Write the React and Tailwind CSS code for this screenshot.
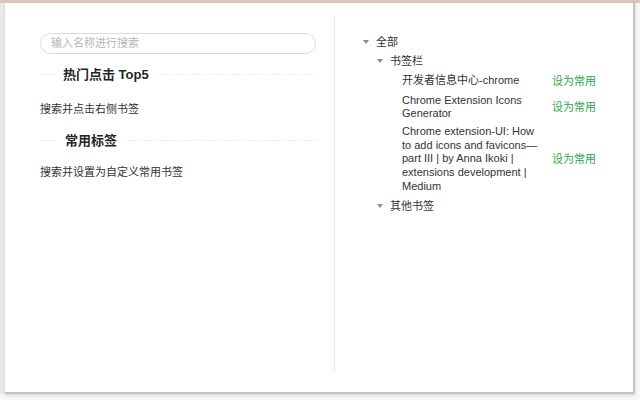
const FONT = { fontFamily: '"Liberation Sans", "Noto Sans CJK SC", sans-serif' }

const BOOKMARKS = [
  { id: 1, title: '开发者信息中心-chrome' },
  { id: 2, title: 'Chrome Extension Icons Generator' },
  { id: 3, title: 'Chrome extension-UI: How to add icons and favicons—part III | by Anna Ikoki | extensions development | Medium' },
]

function Caret() {
  return (
    <svg width="6" height="4" viewBox="0 0 6 4" className="shrink-0">
      <path d="M0 0h6L3 4z" fill="#8c8c8c" />
    </svg>
  )
}

function SectionTitle({ children }) {
  return (
    <div className="flex items-center">
      <div className="w-[16px] border-t border-dashed border-[#ececec]" />
      <span className="px-[7px] text-[13px] font-bold text-[#262626]">{children}</span>
      <div className="flex-1 border-t border-dashed border-[#ececec]" />
    </div>
  )
}

export default function App() {
  return (
    <div className="w-[640px] h-[400px] bg-[#f7f7f7] overflow-hidden flex flex-col" style={FONT}>
      <div className="h-[3px] bg-[#dcc6be] shrink-0" />
      <div className="flex flex-1">
        <div className="w-[5px] h-[391px] bg-[#e8eaec]" />
        <div className="w-[630px] h-[391px] bg-white border-r-2 border-b-2 border-[#c4c4c4] shadow-[0_1px_3px_rgba(0,0,0,0.15)] flex pt-[13px] pb-[19px]">
          {/* Left */}
          <div className="w-[330px] pl-[35px] pr-[18px] pt-[14px] border-r border-[#ececec]">
            <input
              type="text"
              placeholder="输入名称进行搜索"
              className="w-full h-[21px] rounded-full border border-[#dcdcdc] px-[10px] text-[11px] text-[#333] placeholder:text-[#b5b5b5] outline-none"
              style={FONT}
            />
            <div className="mt-[11px]">
              <SectionTitle>热门点击 Top5</SectionTitle>
            </div>
            <p className="mt-[16px] text-[11px] text-[#333]">搜索并点击右侧书签</p>
            <div className="mt-[14px]">
              <SectionTitle>
                <span className="pl-[2px]">常用标签</span>
              </SectionTitle>
            </div>
            <p className="mt-[13px] text-[11px] text-[#333]">搜索并设置为自定义常用书签</p>
          </div>

          {/* Right */}
          <div className="flex-1 pl-[28px] pt-[19px] text-[11px] text-[#333]">
            <div className="flex items-center gap-[7px] h-[14px]">
              <Caret />
              <span>全部</span>
            </div>
            <div className="pl-[14px] mt-[5px]">
              <div className="flex items-center gap-[7px] h-[14px]">
                <Caret />
                <span>书签栏</span>
              </div>
              <ul className="pl-[25px] mt-[5px] flex flex-col gap-[4px]">
                {BOOKMARKS.map(b => (
                  <li key={b.id} className="flex items-center">
                    <span className="w-[142px] leading-[13.7px]">{b.title}</span>
                    <span className="ml-[8px] text-[#2ea44f] whitespace-nowrap">设为常用</span>
                  </li>
                ))}
              </ul>
              <div className="flex items-center gap-[7px] h-[14px] mt-[6px]">
                <Caret />
                <span>其他书签</span>
              </div>
            </div>
          </div>
        </div>
      </div>
    </div>
  )
}
